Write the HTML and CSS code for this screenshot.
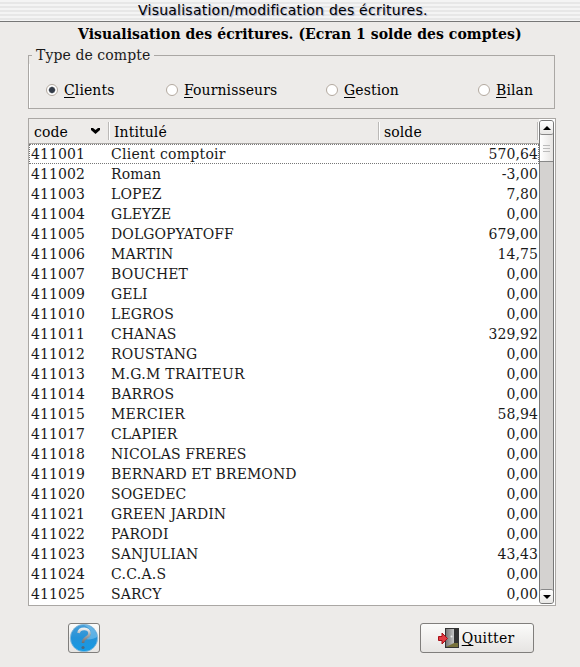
FILE: index.html
```html
<!DOCTYPE html>
<html lang="fr">
<head>
<meta charset="utf-8">
<title>Visualisation/modification des écritures.</title>
<link rel="stylesheet" href="styles.css">
</head>
<body>
<header class="titlebar"><span>Visualisation/modification des écritures.</span></header>
<main>
<h1>Visualisation des écritures. (Ecran 1 solde des comptes)</h1>
<fieldset class="group">
<legend>Type de compte</legend>
<div class="radios">
<label><i class="radio on"></i><span><u>C</u>lients</span></label>
<label><i class="radio"></i><span><u>F</u>ournisseurs</span></label>
<label><i class="radio"></i><span><u>G</u>estion</span></label>
<label><i class="radio"></i><span><u>B</u>ilan</span></label>
</div>
</fieldset>
<section class="list">
<div class="content">
<div class="head"><div class="h-code"><span>code</span><svg width="9" height="6" viewBox="0 0 9 6"><path d="M0 0h2l2.500 2L7 0h2v2L4.500 6 0 2z"/></svg></div><div class="h-name">Intitulé</div><div class="h-solde">solde</div></div>
<div class="rows">
<div class="row focus"><span>411001</span><span class="wide">Client comptoir</span><span>570,64</span></div>
<div class="row"><span>411002</span><span>Roman</span><span>-3,00</span></div>
<div class="row"><span>411003</span><span>LOPEZ</span><span>7,80</span></div>
<div class="row"><span>411004</span><span>GLEYZE</span><span>0,00</span></div>
<div class="row"><span>411005</span><span>DOLGOPYATOFF</span><span>679,00</span></div>
<div class="row"><span>411006</span><span>MARTIN</span><span>14,75</span></div>
<div class="row"><span>411007</span><span>BOUCHET</span><span>0,00</span></div>
<div class="row"><span>411009</span><span>GELI</span><span>0,00</span></div>
<div class="row"><span>411010</span><span>LEGROS</span><span>0,00</span></div>
<div class="row"><span>411011</span><span>CHANAS</span><span>329,92</span></div>
<div class="row"><span>411012</span><span>ROUSTANG</span><span>0,00</span></div>
<div class="row"><span>411013</span><span class="wide">M.G.M TRAITEUR</span><span>0,00</span></div>
<div class="row"><span>411014</span><span>BARROS</span><span>0,00</span></div>
<div class="row"><span>411015</span><span class="wide">MERCIER</span><span>58,94</span></div>
<div class="row"><span>411017</span><span>CLAPIER</span><span>0,00</span></div>
<div class="row"><span>411018</span><span>NICOLAS FRERES</span><span>0,00</span></div>
<div class="row"><span>411019</span><span>BERNARD ET BREMOND</span><span>0,00</span></div>
<div class="row"><span>411020</span><span>SOGEDEC</span><span>0,00</span></div>
<div class="row"><span>411021</span><span>GREEN JARDIN</span><span>0,00</span></div>
<div class="row"><span>411022</span><span>PARODI</span><span>0,00</span></div>
<div class="row"><span>411023</span><span>SANJULIAN</span><span>43,43</span></div>
<div class="row"><span>411024</span><span class="wide">C.C.A.S</span><span>0,00</span></div>
<div class="row"><span>411025</span><span>SARCY</span><span>0,00</span></div>
</div>
</div>
<div class="scroll">
<div class="arrow up"><svg width="8" height="4" viewBox="0 0 8 4"><path d="M0 4h8L4 0z"/></svg></div>
<div class="thumb"><i></i><i></i><i></i></div>
<div class="arrow down"><svg width="8" height="4" viewBox="0 0 8 4"><path d="M0 0h8L4 4z"/></svg></div>
</div>
</section>
<footer>
<button class="help" aria-label="Aide"><svg width="30" height="28" viewBox="0 0 30 28"><defs><linearGradient id="b" x2="0" y2="1"><stop offset="0" stop-color="#4a9fd8"/><stop offset=".5" stop-color="#2492d8"/><stop offset="1" stop-color="#149be6"/></linearGradient><linearGradient id="q" x2="0" y2="1"><stop offset="0" stop-color="#eceff1"/><stop offset=".4" stop-color="#a9adb0"/><stop offset="1" stop-color="#696b70"/></linearGradient></defs><circle cx="15" cy="14" r="13.700" fill="url(#b)" stroke="#8dbbd9" stroke-width=".8"/><path d="M16 15C20 16 25 15 28 13A13 13 0 0 0 15 1Q23 5 22 11z" fill="#a8dcfa" opacity=".4"/><path d="M9.500 9C10.500 3.500 20.500 3.500 20.500 9.500c0 4.500-6.500 3.500-6.500 9.500" fill="none" stroke="url(#q)" stroke-width="2.700"/><circle cx="14" cy="23.500" r="1.600" fill="#4c6880"/></svg></button>
<button class="quit"><svg width="22" height="20" viewBox="0 0 22 20"><defs><linearGradient id="d"><stop offset="0" stop-color="#777"/><stop offset="1" stop-color="#c5c5c5"/></linearGradient></defs><path d="M7 0h14v20H7z" fill="#333"/><path d="M9 18l6-3h5v4H9z" fill="#77713a"/><path d="M8 1h8v14l-8 4z" fill="url(#d)"/><circle cx="13.500" cy="8.500" r="1" fill="#eee"/><path d="M.5 8.500H4V5l5.500 5.500L4 16v-3.500H.5z" fill="#e23b43" stroke="#a70e17"/></svg><span><u>Q</u>uitter</span></button>
</footer>
</main>
</body>
</html>
```
FILE: styles.css
```css
* { box-sizing: border-box; }
body { margin: 0; width: 580px; height: 667px; overflow: hidden; background: #edebe9; color: #1a1a1a; font: 14px/20px "DejaVu Serif", serif; letter-spacing: .09px; }
.titlebar { height: 22px; border-bottom: 1px solid #777; background: repeating-linear-gradient(#f4f4f4 0 2px, #e7e7e7 2px 4px); color: #000; font: 14px/20px "DejaVu Sans", sans-serif; letter-spacing: .24px; padding-left: 138px; text-shadow: 1px 1px 1px #9aa4c4; white-space: nowrap; }
h1 { margin: 2px 0 0; padding-left: 78px; height: 22px; font-size: 14px; line-height: 20px; letter-spacing: .05px; color: #000; white-space: nowrap; }
.group { margin: 0 25px 0 28px; padding: 0; height: 63px; border: 1px solid #aaa7a4; }
.group legend { margin-left: 3px; padding: 0 4px; height: 18px; line-height: 18px; }
.radios { display: grid; grid-template-columns: 120px 160px 152px 1fr; padding: 15px 0 0 16px; height: 44px; color: #000; border-left: 1px solid #fff; }
label { display: flex; align-items: center; align-self: start; gap: 6px; height: 22px; }
.radio { width: 12px; height: 12px; border: 1px solid #b3a99f; border-radius: 50%; background: #fff; }
.radio.on { background: radial-gradient(circle, #333b48 0 2.5px, #fff 3.8px); }
u { text-underline-offset: 2px; text-decoration-thickness: 1px; }
.list { margin: 9px 24px 0 28px; height: 488px; border: 1px solid #aaa7a4; background: #fff; display: flex; }
.content { width: 510px; }
.head { height: 25px; background: #edebe9; border-bottom: 1px solid #aaa7a4; display: flex; align-items: center; color: #000; }
.head > div { height: 18px; line-height: 20px; border-right: 1px solid #bbb9b7; box-shadow: 1px 0 #fff; padding-left: 5px; }
.h-code { width: 80px; display: flex; justify-content: space-between; padding-right: 8px; }
.h-code svg { margin-top: 6px; }
.h-name { width: 270px; }
.h-solde { width: 159px; }
.row { height: 20px; line-height: 20px; display: grid; grid-template-columns: 80px 1fr 100px; padding: 0 1px 0 2px; white-space: nowrap; }
.row span:last-child { text-align: right; }
.row .wide { letter-spacing: .27px; }
.focus { outline: 1px dotted #777; outline-offset: -1px; }
.scroll { width: 15px; margin: 1px 0; border: 1px solid #777; border-radius: 3px; background: #d4d2d0; display: flex; flex-direction: column; }
.arrow { height: 14px; display: flex; align-items: center; justify-content: center; background: linear-gradient(#fff, #e8e7e5); border-radius: 2px; }
.up { border-bottom: 1px solid #888; }
.down { margin-top: auto; border-top: 1px solid #888; }
.thumb { height: 27px; background: linear-gradient(90deg, #fff, #e6e4e2); border-bottom: 1px solid #888; display: flex; flex-direction: column; align-items: center; justify-content: center; gap: 2px; }
.thumb i { width: 7px; height: 1px; background: #bbb; }
footer { margin: 17px 46px 0 68px; display: flex; justify-content: space-between; }
button { font: inherit; letter-spacing: .2px; color: #000; padding: 0; height: 30px; border: 1px solid #807e7c; border-radius: 3px; background: linear-gradient(#fbfbfa, #e6e4e2); display: flex; align-items: center; justify-content: center; }
.help { width: 32px; }
.quit { width: 114px; gap: 2px; padding-right: 2px; }
```
